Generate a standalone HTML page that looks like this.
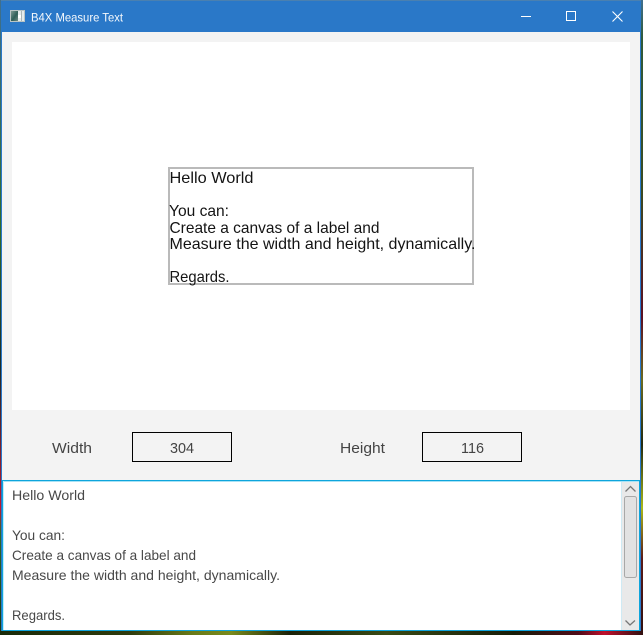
<!DOCTYPE html>
<html>
<head>
<meta charset="utf-8">
<title>B4X Measure Text</title>
<style>
html,body{margin:0;padding:0;background:#111;}
body{width:643px;height:635px;overflow:hidden;}
svg{display:block;}
text{font-family:"Liberation Sans",sans-serif;white-space:pre;}
</style>
</head>
<body>
<svg width="643" height="635" viewBox="0 0 643 635" xmlns="http://www.w3.org/2000/svg">
  <defs>
    <linearGradient id="rightbg" x1="0" y1="0" x2="0" y2="1">
      <stop offset="0" stop-color="#3f6f8f"/>
      <stop offset="0.06" stop-color="#2f5a3a"/>
      <stop offset="0.3" stop-color="#3a4a20"/>
      <stop offset="0.5" stop-color="#5a1022"/>
      <stop offset="0.6" stop-color="#6a6a20"/>
      <stop offset="0.7" stop-color="#222a10"/>
      <stop offset="0.8" stop-color="#a9b81a"/>
      <stop offset="0.88" stop-color="#5a1a18"/>
      <stop offset="1" stop-color="#301010"/>
    </linearGradient>
    <linearGradient id="leftbg" x1="0" y1="0" x2="0" y2="1">
      <stop offset="0" stop-color="#3f6f8f"/>
      <stop offset="0.36" stop-color="#2f6a2a"/>
      <stop offset="0.58" stop-color="#1a2a2a"/>
      <stop offset="0.8" stop-color="#c01830"/>
      <stop offset="0.84" stop-color="#2f6a2a"/>
      <stop offset="1" stop-color="#1a3a10"/>
    </linearGradient>
    <linearGradient id="bottombg" x1="0" y1="0" x2="1" y2="0">
      <stop offset="0" stop-color="#1a2a08"/>
      <stop offset="0.2" stop-color="#2f3a0c"/>
      <stop offset="0.3" stop-color="#6a7a18"/>
      <stop offset="0.36" stop-color="#7a8a1c"/>
      <stop offset="0.45" stop-color="#1c2208"/>
      <stop offset="0.6" stop-color="#3a4a14"/>
      <stop offset="0.8" stop-color="#181c08"/>
      <stop offset="0.9" stop-color="#500c18"/>
      <stop offset="0.94" stop-color="#c0102c"/>
      <stop offset="1" stop-color="#301010"/>
    </linearGradient>
    <linearGradient id="iconl" x1="0" y1="0" x2="1" y2="1">
      <stop offset="0" stop-color="#7f9a94"/>
      <stop offset="0.55" stop-color="#2f5f58"/>
      <stop offset="1" stop-color="#6f8a84"/>
    </linearGradient>
  </defs>

  <!-- desktop peeking around the window -->
  <rect x="0" y="0" width="643" height="635" fill="#111"/>
  <rect x="0" y="0" width="2" height="635" fill="url(#leftbg)"/>
  <rect x="641" y="0" width="2" height="635" fill="url(#rightbg)"/>
  <rect x="0" y="631" width="643" height="4" fill="url(#bottombg)"/>

  <!-- window frame -->
  <rect x="1" y="0" width="640" height="631" fill="#2a78c8"/>
  <rect x="2" y="32" width="638" height="598" fill="#f3f3f3"/>

  <!-- title bar -->
  <rect x="1" y="0" width="640" height="1" fill="#4a80b0"/>
  <rect x="10" y="10" width="15" height="12" fill="#b9c4c4"/>
  <rect x="11" y="11" width="7" height="10" fill="url(#iconl)"/>
  <rect x="18" y="11" width="6" height="10" fill="#e6ecec"/>
  <rect x="21" y="11" width="1" height="10" fill="#aab6b6"/>
  <rect x="18" y="15" width="3" height="3" fill="#ffffff"/>
  <text x="31" y="21.500" font-size="12" fill="#f4f8fc" textLength="92" lengthAdjust="spacingAndGlyphs">B4X Measure Text</text>
  <rect x="521" y="16" width="10" height="1" fill="#ffffff"/>
  <rect x="566.500" y="11.500" width="9" height="9" fill="none" stroke="#ffffff" stroke-width="1"/>
  <path d="M612.500 11.500 L622.500 21.500 M622.500 11.500 L612.500 21.500" stroke="#ffffff" stroke-width="1.100" fill="none"/>

  <!-- white canvas panel -->
  <rect x="12" y="42" width="618" height="368" fill="#ffffff"/>

  <!-- measured label -->
  <rect x="169" y="168" width="304" height="116" fill="#ffffff" stroke="#bababa" stroke-width="2"/>
  <g font-size="16" fill="#141414">
    <text x="169.500" y="183" textLength="84" lengthAdjust="spacingAndGlyphs">Hello World</text>
    <text x="169" y="216" textLength="60" lengthAdjust="spacingAndGlyphs">You can:</text>
    <text x="169.500" y="233" textLength="210" lengthAdjust="spacingAndGlyphs">Create a canvas of a label and</text>
    <text x="169.500" y="249" textLength="306" lengthAdjust="spacingAndGlyphs">Measure the width and height, dynamically.</text>
    <text x="169.500" y="282" textLength="60" lengthAdjust="spacingAndGlyphs">Regards.</text>
  </g>

  <!-- width / height row -->
  <g font-size="15" fill="#444444">
    <text x="52" y="453" textLength="40" lengthAdjust="spacingAndGlyphs">Width</text>
    <text x="340" y="453" textLength="45" lengthAdjust="spacingAndGlyphs">Height</text>
    <text x="170" y="453" textLength="24" lengthAdjust="spacingAndGlyphs">304</text>
    <text x="461" y="453" textLength="23" lengthAdjust="spacingAndGlyphs">116</text>
  </g>
  <rect x="132.500" y="432.500" width="99" height="29" fill="none" stroke="#000000" stroke-width="1"/>
  <rect x="422.500" y="432.500" width="99" height="29" fill="none" stroke="#000000" stroke-width="1"/>

  <!-- text area -->
  <rect x="2" y="480" width="638" height="151" fill="#0ea5dc"/>
  <rect x="3" y="481" width="636" height="149" fill="#ffffff"/>
  <rect x="3" y="481" width="636" height="1" fill="#a9e2f5"/>
  <rect x="3" y="481" width="1" height="149" fill="#c4ecf8"/>
  <rect x="621" y="482" width="1" height="148" fill="#cfeaf4"/>
  <rect x="622" y="482" width="17" height="148" fill="#e9e9e9"/>
  <rect x="2" y="630" width="638" height="1" fill="#0ea5dc"/>
  <rect x="624.500" y="496.500" width="12" height="81" rx="2" ry="2" fill="#e2e2e2" stroke="#a8a8a8" stroke-width="1"/>
  <path d="M625.500 491.500 L630.500 486.500 L635.500 491.500" fill="none" stroke="#777777" stroke-width="1.300"/>
  <path d="M625.500 620.500 L630 625 L635 620.500" fill="none" stroke="#777777" stroke-width="1.300"/>
  <g font-size="14" fill="#484848">
    <text x="12" y="500" textLength="73" lengthAdjust="spacingAndGlyphs">Hello World</text>
    <text x="12" y="540" textLength="53" lengthAdjust="spacingAndGlyphs">You can:</text>
    <text x="12" y="560" textLength="184" lengthAdjust="spacingAndGlyphs">Create a canvas of a label and</text>
    <text x="12" y="580" textLength="268" lengthAdjust="spacingAndGlyphs">Measure the width and height, dynamically.</text>
    <text x="12" y="620" textLength="53" lengthAdjust="spacingAndGlyphs">Regards.</text>
  </g>
</svg>
</body>
</html>
